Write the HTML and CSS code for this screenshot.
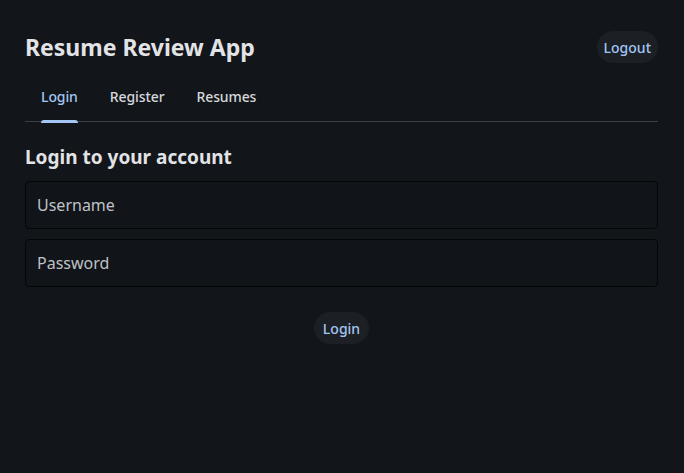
FILE: index.html
```html
<!DOCTYPE html>
<html lang="en">
<head>
<meta charset="utf-8">
<title>Resume Review App</title>
<link rel="stylesheet" href="styles.css">
</head>
<body>
<div class="app">
  <header class="header">
    <h1 class="title">Resume Review App</h1>
    <button class="pill-btn">Logout</button>
  </header>
  <nav class="tabs">
    <a class="tab active">Login</a>
    <a class="tab">Register</a>
    <a class="tab">Resumes</a>
  </nav>
  <section class="login">
    <h2 class="subtitle">Login to your account</h2>
    <form class="form">
      <input class="field" type="text" placeholder="Username">
      <input class="field" type="password" placeholder="Password">
      <div class="actions"><button class="pill-btn login-btn" type="button">Login</button></div>
    </form>
  </section>
</div>
</body>
</html>
```

FILE: styles.css
```css
* { box-sizing: border-box; }
html, body { margin: 0; padding: 0; background: #121519; }
body { font-family: "Noto Sans", "Open Sans", sans-serif; color: #e3e4e6; }
.app { padding: 0 26px 0 25px; }
.header { display: flex; align-items: center; justify-content: space-between; padding-top: 31px; height: 63px; }
.title { margin: 0; font-size: 23px; font-weight: 700; color: #e2e3e6; line-height: 32px; }
.pill-btn {
  font-family: inherit; font-size: 14px; font-weight: 500; color: #a3c6f4;
  background: #1c1f24; border: none; border-radius: 16px; height: 32px; padding: 0 7px;
}
.login-btn { padding: 0 9px; }
.tabs { display: flex; margin-top: 18px; border-bottom: 1px solid #3d4046; height: 41px; }
.tab { font-size: 14px; font-weight: 500; color: #d6d8db; padding: 0 16px 8px; line-height: 32px; position: relative; letter-spacing: -0.1px; }
.tab.active { color: #a3c6f4; }
.tab.active::after { content: ""; position: absolute; left: 16px; right: 16px; bottom: -2px; height: 3px; background: #a3c6f4; border-radius: 3px 3px 0 0; }
.subtitle { margin: 21px 0 0; font-size: 19px; font-weight: 700; line-height: 28px; color: #e2e3e6; }
.form { display: flex; flex-direction: column; gap: 10px; margin-top: 10px; }
.field {
  height: 48px; width: 100%; background: #111418; border: 1px solid #050608; border-radius: 4px;
  padding: 0 11px; font-family: inherit; font-size: 16px; color: #e3e4e6; outline: none;
}
.field::placeholder { color: #bfc2c7; }
.actions { display: flex; justify-content: center; margin-top: 15px; }
```
